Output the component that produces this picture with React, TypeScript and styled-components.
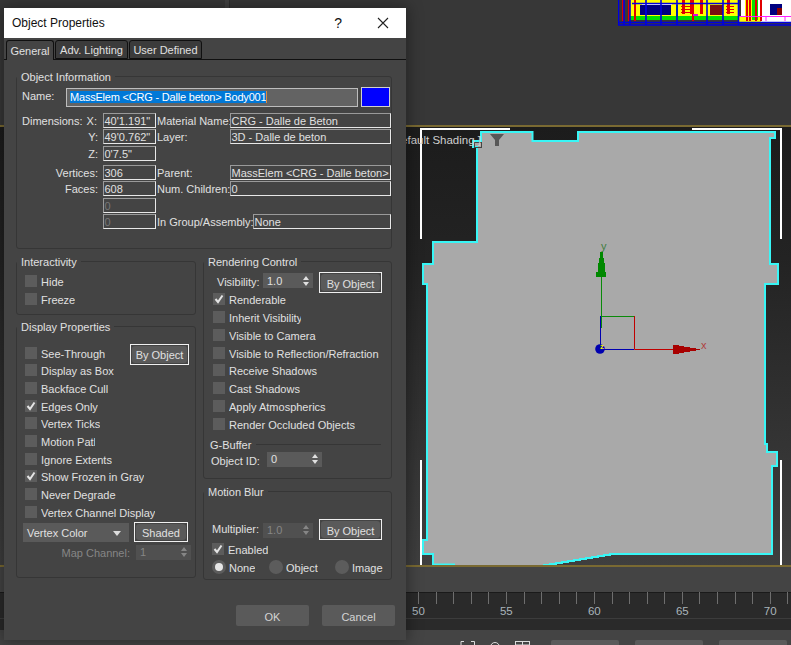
import React from "react";
import styled, { createGlobalStyle } from "styled-components";

const Global = createGlobalStyle`
  html, body { margin: 0; padding: 0; background: #373737; overflow: hidden; }
  #root { width: 791px; height: 645px; }
  * { box-sizing: border-box; }
`;

const Page = styled.div`
  position: relative;
  width: 791px;
  height: 645px;
  overflow: hidden;
  display: flex;
  flex-direction: column;
  font-family: "Liberation Sans", Arial, sans-serif;
  font-size: 11px;
  color: #e0e0e0;
`;
const TopPanel = styled.div`
  height: 125px;
  flex: none;
  position: relative;
  background: linear-gradient(90deg, #373737 0 225px, #404040 225px 229px, #2c2c2c 229px 230px, #373737 230px);
`;
const GoldLine = styled.div`
  height: 2px;
  flex: none;
  background: #7a6a32;
`;
const Viewport = styled.div`
  position: relative;
  height: 438px;
  flex: none;
  background: linear-gradient(180deg, #1c1c1c 0%, #232323 30%, #2f2f2f 60%, #3f3f3f 100%);
`;
const ViewportLabel = styled.span`
  position: absolute;
  right: 310px;
  top: 7px;
  font-size: 11.5px;
  color: #cfcfcf;
  white-space: pre;
`;
const Art = styled.svg`
  position: absolute;
  left: 0;
  top: 0;
  display: block;
`;
const Band = styled.div`
  height: 25px;
  flex: none;
  background: #444444;
`;
const Ruler = styled.div`
  height: 38px;
  flex: none;
  background: linear-gradient(180deg, #1a1a1a 0 1px, #2a2a2a 1px 26px, #3c3c3c 26px 27px, #2a2a2a 27px);
  display: flex;
  padding-left: 400.4px;
`;
const Tick = styled.div`
  position: relative;
  flex: 0 0 17.6px;
  height: 12px;
  border-left: 1px solid #6e6e6e;
`;
const TickLabel = styled.span`
  position: absolute;
  left: -7px;
  top: 13px;
  font-size: 11.5px;
  color: #a9b4ba;
`;
const Status = styled.div`
  height: 15px;
  flex: none;
  overflow: hidden;
  background: #444444;
  display: flex;
  align-items: flex-start;
  padding: 10px 0 0 460px;
  gap: 16px;
`;
const StatusIcons = styled.svg`
  flex: none;
  margin: 1px -1px 0 0;
  display: block;
`;
const StatusChip = styled.div`
  width: 68px;
  height: 12px;
  background: #5a5a5a;
  border-radius: 2px 2px 0 0;
`;

const Dialog = styled.div`
  position: absolute;
  left: 4px;
  top: 8px;
  width: 402px;
  height: 632px;
  background: #444444;
  box-shadow: 0 0 14px 2px rgba(0, 0, 0, 0.35);
  display: flex;
  flex-direction: column;
`;
const TitleBar = styled.div`
  height: 30px;
  flex: none;
  background: #ffffff;
  color: #111111;
  display: flex;
  align-items: center;
  padding: 0 17px 0 8px;
  font-size: 12px;
`;
const TitleText = styled.span`
  flex: 1;
`;
const HelpMark = styled.span`
  font-size: 14px;
  margin-right: 35px;
`;
const TabBar = styled.div`
  height: 22px;
  flex: none;
  display: flex;
  align-items: flex-end;
  padding-left: 2px;
  gap: 1px;
  border-bottom: 1px solid #101010;
`;
const Tab = styled.div<{ $active?: boolean; $w: number }>`
  width: ${(p) => p.$w}px;
  height: ${(p) => (p.$active ? 20 : 19)}px;
  margin-bottom: ${(p) => (p.$active ? -1 : 0)}px;
  background: ${(p) => (p.$active ? "#444444" : "#3b3b3b")};
  border: 1px solid #101010;
  border-bottom: ${(p) => (p.$active ? "none" : "1px solid #101010")};
  border-radius: 3px 3px 0 0;
  display: flex;
  align-items: center;
  justify-content: center;
`;
const Body = styled.div`
  flex: 1;
  padding: 16px 14px 0 12px;
  display: flex;
  flex-direction: column;
`;
const Group = styled.div<{ $h: number; $pt: number; $pl: number; $mt?: number }>`
  position: relative;
  height: ${(p) => p.$h}px;
  margin-top: ${(p) => p.$mt ?? 0}px;
  border: 1px solid #363636;
  border-radius: 3px;
  padding: ${(p) => p.$pt}px 0 0 ${(p) => p.$pl}px;
  display: flex;
  flex-direction: column;
`;
const Legend = styled.span`
  position: absolute;
  left: 0;
  top: -8px;
  height: 16px;
  line-height: 16px;
  padding: 0 4px;
  background: #444444;
  white-space: nowrap;
`;
const NameRow = styled.div`
  height: 20px;
  display: flex;
  align-items: center;
  margin-bottom: 6px;
`;
const NameLabel = styled.span`
  width: 44px;
  margin-top: -2px;
`;
const NameInput = styled.div`
  width: 292px;
  height: 19px;
  background: #636363;
  border: 1px solid #bdbdbd;
  padding-left: 3px;
  display: flex;
  align-items: center;
  color: #ffffff;
`;
const Selected = styled.span`
  width: 197px;
  height: 12px;
  line-height: 12px;
  letter-spacing: -0.2px;
  background: #0078d7;
  border-right: 1px solid #e08a3c;
  white-space: nowrap;
  overflow: hidden;
`;
const Swatch = styled.div`
  width: 29px;
  height: 20px;
  margin-left: 3px;
  background: #0000ff;
  border: 1px solid #d0d0d0;
`;
const InfoGrid = styled.div`
  display: grid;
  grid-template-columns: 81px 53px 74px 161px;
  grid-template-rows: 16px 17px 19px 16px 17px 16px 15px;
`;
const DimLabel = styled.span`
  height: 15px;
  line-height: 17px;
  display: flex;
  justify-content: space-between;
  padding-right: 6px;
`;
const RightLabel = styled.span`
  height: 15px;
  line-height: 17px;
  text-align: right;
  padding-right: 5px;
  white-space: nowrap;
`;
const MidLabel = styled.span`
  height: 15px;
  line-height: 17px;
  padding-left: 1px;
  white-space: nowrap;
`;
const Field = styled.div<{ $dim?: boolean }>`
  height: 15px;
  line-height: 15px;
  padding-left: 0.5px;
  border: 1px solid;
  border-color: #9a9a9a #e8e8e8 #e8e8e8 #9a9a9a;
  color: ${(p) => (p.$dim ? "#777777" : "#e0e0e0")};
  white-space: nowrap;
  overflow: hidden;
`;
const Empty = styled.span``;
const GroupRow = styled.div`
  grid-column: 3 / 5;
  display: grid;
  grid-template-columns: 97px 138px;
`;
const Columns = styled.div`
  display: grid;
  grid-template-columns: 180px 189px;
  column-gap: 7px;
  margin-top: 12px;
`;
const Stack = styled.div`
  display: flex;
  flex-direction: column;
`;
const CheckRow = styled.div<{ $h: number }>`
  height: ${(p) => p.$h}px;
  display: flex;
  align-items: center;
  justify-content: space-between;
`;
const CheckItem = styled.div`
  display: flex;
  align-items: center;
`;
const Box = styled.span`
  width: 12px;
  height: 12px;
  flex: none;
  margin-right: 4px;
  background: #5c5c5c;
  display: flex;
  align-items: center;
  justify-content: center;
`;
const ClipText = styled.span<{ $w?: number }>`
  display: block;
  padding-top: 2px;
  white-space: nowrap;
  overflow: hidden;
  ${(p) => (p.$w ? `width: ${p.$w}px;` : "")}
`;
const OutlinedButton = styled.div<{ $w: number; $h: number; $mt?: number; $mr?: number }>`
  width: ${(p) => p.$w}px;
  height: ${(p) => p.$h}px;
  margin-top: ${(p) => p.$mt ?? 0}px;
  margin-right: ${(p) => p.$mr ?? 0}px;
  flex: none;
  border: 1px solid #f0f0f0;
  padding: 1px;
`;
const ButtonFace = styled.div`
  height: 100%;
  padding-top: 2px;
  background: #5a5a5a;
  border-radius: 3px;
  display: flex;
  align-items: center;
  justify-content: center;
`;
const ShadeRow = styled.div`
  display: flex;
  height: 20px;
  margin: 1px 0 0 -2px;
  align-items: flex-start;
`;
const Dropdown = styled.div`
  width: 106px;
  height: 19px;
  margin: 1px 5px 0 0;
  padding: 2px 8px 0 4px;
  background: #5a5a5a;
  display: flex;
  align-items: center;
  justify-content: space-between;
`;
const MapRow = styled.div`
  display: flex;
  align-items: center;
  margin: 3px 0 0 -2px;
  height: 15px;
  color: #868686;
`;
const MapLabel = styled.span`
  width: 107px;
  padding-top: 2px;
  text-align: right;
  margin-right: 6px;
`;
const Spinner = styled.div<{ $w: number; $dim?: boolean }>`
  width: ${(p) => p.$w}px;
  height: 15px;
  flex: none;
  background: ${(p) => (p.$dim ? "#505050" : "#5a5a5a")};
  color: ${(p) => (p.$dim ? "#868686" : "#e0e0e0")};
  padding: 0 4px;
  display: flex;
  align-items: center;
  justify-content: space-between;
`;
const VisibilityRow = styled.div`
  height: 18px;
  display: flex;
  align-items: flex-start;
  padding-left: 4px;
`;
const FieldLabel = styled.span<{ $w: number; $dy?: number }>`
  width: ${(p) => p.$w}px;
  padding-top: ${(p) => p.$dy ?? 0}px;
  flex: none;
  line-height: 17px;
  white-space: nowrap;
`;
const SpinnerSlot = styled.div`
  margin: 1px 6px 0 0;
`;
const SubHeader = styled.div`
  display: flex;
  align-items: center;
  height: 14px;
  margin: 5px 10px 0 -3px;
`;
const SubLine = styled.span`
  flex: 1;
  height: 1px;
  margin-left: 5px;
  background: #363636;
`;
const SubRow = styled.div`
  display: flex;
  align-items: center;
  height: 15px;
  margin-left: -2px;
`;
const MultiplierRow = styled.div`
  height: 21px;
  margin-top: 27px;
  display: flex;
  align-items: center;
`;
const RadioRow = styled.div`
  height: 18px;
  display: grid;
  grid-template-columns: 57px 66px auto;
  align-items: center;
`;
const Radio = styled.span<{ $on?: boolean }>`
  width: 14px;
  height: 14px;
  flex: none;
  border-radius: 50%;
  margin-right: 3px;
  background: #5c5c5c;
  display: flex;
  align-items: center;
  justify-content: center;
  &::after {
    content: "";
    width: 8px;
    height: 8px;
    border-radius: 50%;
    background: ${(p) => (p.$on ? "#e6e6e6" : "transparent")};
  }
`;
const Footer = styled.div`
  display: flex;
  gap: 13px;
  justify-content: flex-end;
  margin: 25px -3px 0 0;
`;
const PushButton = styled.div`
  width: 73px;
  height: 21px;
  padding-top: 2px;
  background: #5a5a5a;
  border-radius: 2px;
  display: flex;
  align-items: center;
  justify-content: center;
  color: #d4d4d4;
`;

const Check = () => (
  <svg width="10" height="10" viewBox="0 0 10 10">
    <path d="M1.5 5 L4 8 L8.5 1.5" fill="none" stroke="#e4e4e4" strokeWidth="2" />
  </svg>
);
const Arrows = () => (
  <svg width="6" height="10" viewBox="0 0 6 10">
    <path d="M3 0 L6 4 H0 Z M3 10 L0 6 H6 Z" fill="currentColor" />
  </svg>
);
const Caret = () => (
  <svg width="8" height="5" viewBox="0 0 8 5">
    <path d="M0 0 H8 L4 5 Z" fill="#dcdcdc" />
  </svg>
);

const CheckBoxRow = ({ label, on, h, w, children }: { label: string; on?: boolean; h: number; w?: number; children?: React.ReactNode }) => (
  <CheckRow $h={h}>
    <CheckItem>
      <Box>{on && <Check />}</Box>
      <ClipText $w={w}>{label}</ClipText>
    </CheckItem>
    {children}
  </CheckRow>
);

const RadioItem = ({ label, on }: { label: string; on?: boolean }) => (
  <CheckItem>
    <Radio $on={on} />
    <ClipText>{label}</ClipText>
  </CheckItem>
);

const SLOPE = Array.from({ length: 12 }, (_, i) => {
  const x = 616 - i * 6;
  const y = 554 + i;
  return `${x},${y} ${x - 6},${y}`;
}).join(" ");

const OUTLINE = `481,132 532.5,132 532.5,141 578,141 578,132 775,132 775,138 770,138 770,264 778,264 778,284 765,284 765,444 767,444 767,452 777,452 777,466 772,466 772,554 ${SLOPE} 544,568 454,568 454,564.5 433,564.5 433,554 423,554 423,540 427,540 427,284 423,284 423,264 433,264 433,242 477,242 477,147 473,147 473,141 481,141`;

const ViewportArt = () => (
  <Art width="791" height="438" viewBox="0 127 791 438">
    <g stroke="#ffffff" strokeWidth="2" fill="none">
      <path d="M510 129 H421 V239" />
      <path d="M692 129 H781 V239" />
      <path d="M421 460 V565" />
      <path d="M781 460 V565" />
    </g>
    <polygon points={OUTLINE} fill="#a9a9a9" stroke="#38f6f6" strokeWidth="2" />
    <path d="M490 134 H504 L499 140 V146 H495 V140 Z" fill="#575757" />
    <rect x="474.5" y="142.5" width="7" height="5" fill="none" stroke="#444" />
    <path d="M634.5 316 V349.5 H673" stroke="#c00000" fill="none" />
    <path d="M600.5 316 V349.5 H634" stroke="#0000b0" fill="none" />
    <path d="M601.5 277 V328 M601 316.5 H634" stroke="#0a8a0a" fill="none" />
    <path d="M600 252 H603 V258 H604 V263 H605 V272 H606 V277 H596 V272 H598 V263 H599 V258 H600 Z" fill="#008800" />
    <text x="601" y="250" fontSize="11" fontFamily="Liberation Sans, sans-serif" fill="#3f7d3f">y</text>
    <path d="M673 345 H679 V346 H684 V347 H690 V348 H696 V351 H690 V352 H684 V353 H679 V354 H673 Z" fill="#a80000" />
    <path d="M696 349.5 H700" stroke="#a80000" />
    <text x="701" y="349" fontSize="11" fontFamily="Liberation Sans, sans-serif" fill="#b04040">x</text>
    <circle cx="600" cy="349" r="4.8" fill="#0000b0" />
    <text x="600" y="349" fontSize="8" fontWeight="bold" fontFamily="Liberation Sans, sans-serif" fill="#f0f000">z</text>
  </Art>
);

const Plan = styled.svg`
  position: absolute;
  left: 618px;
  top: 0;
  display: block;
`;
const PlanArt = () => (
  <Plan width="173" height="26" viewBox="618 0 173 26">
    <rect x="630" y="0" width="109" height="16" fill="#ffff00" />
    <rect x="630" y="16" width="109" height="4" fill="#00e000" />
    <rect x="640" y="5" width="31" height="10" fill="#000080" />
    <rect x="642" y="4" width="30" height="1" fill="#ffffff" />
    <rect x="676" y="5" width="2" height="12" fill="#00a000" />
    <rect x="710" y="5" width="13" height="10" fill="#7a1010" />
    <rect x="741" y="0" width="50" height="22" fill="#ffffff" />
    <rect x="739" y="17" width="22" height="5" fill="#ffff00" />
    <rect x="770" y="4" width="12" height="11" fill="#000080" />
    <rect x="777" y="8" width="5" height="7" fill="#8b0000" />
    <rect x="745" y="0" width="13" height="16" fill="#ffff00" />
    <rect x="752" y="0" width="6" height="20" fill="#00e000" />
    {[622, 628, 634, 692, 746, 749, 755, 760].map((x) => (
      <rect key={x} x={x} y="0" width="2" height="21" fill="#e00000" />
    ))}
    {[682, 690, 727, 700].map((x) => (
      <rect key={x} x={x} y="0" width="3" height="14" fill="#e00000" />
    ))}
    {[6, 9, 12].map((y) => (
      <React.Fragment key={y}>
        <rect x="681" y={y} width="9" height="1" fill="#e00000" />
        <rect x="726" y={y} width="8" height="1" fill="#e00000" />
      </React.Fragment>
    ))}
    <rect x="693" y="14" width="5" height="2" fill="#e000e0" />
    <path d="M739 16.5 H791 M766 16 V21 M785 16 V21" stroke="#ff20ff" strokeWidth="1" fill="none" />
    <path d="M632 3.5 H739 M618 22.5 H791 M618 25 H791" stroke="#0000e0" strokeWidth="1.6" />
    {[618.5, 624, 630, 646, 661, 677, 707, 723, 738.5].map((x) => (
      <path key={x} d={`M${x} 0 V25`} stroke="#0000e0" strokeWidth="1.6" />
    ))}
  </Plan>
);

const TICKS = Array.from({ length: 23 }, (_, i) => i);

export default function App() {
  return (
    <Page>
      <Global />
      <TopPanel>
        <PlanArt />
      </TopPanel>
      <GoldLine />
      <Viewport>
        <ViewportArt />
        <ViewportLabel>[ Default Shading ]</ViewportLabel>
      </Viewport>
      <GoldLine />
      <Band />
      <Ruler>
        {TICKS.map((i) => (
          <Tick key={i}>{i % 5 === 1 && <TickLabel>{50 + (i - 1)}</TickLabel>}</Tick>
        ))}
      </Ruler>
      <Status>
        <StatusIcons width="76" height="8" viewBox="0 0 76 8" fill="none" stroke="#dcdcdc">
          <path d="M1 5 V0.5 H4 M11 0.5 H14.5 V5" />
          <circle cx="35" cy="6" r="4.5" />
          <rect x="55.5" y="0.5" width="14" height="10" />
          <path d="M62.5 0.5 V8 M55.5 4 H69.5" />
        </StatusIcons>
        <StatusChip />
        <StatusChip />
        <StatusChip />
      </Status>

      <Dialog>
        <TitleBar>
          <TitleText>Object Properties</TitleText>
          <HelpMark>?</HelpMark>
          <svg width="12" height="12" viewBox="0 0 12 12">
            <path d="M1 1 L11 11 M11 1 L1 11" stroke="#222" strokeWidth="1.1" />
          </svg>
        </TitleBar>
        <TabBar>
          <Tab $active $w={48}>General</Tab>
          <Tab $w={73}>Adv. Lighting</Tab>
          <Tab $w={73}>User Defined</Tab>
        </TabBar>
        <Body>
          <Group $h={173} $pt={10} $pl={5}>
            <Legend>Object Information</Legend>
            <NameRow>
              <NameLabel>Name:</NameLabel>
              <NameInput>
                <Selected>MassElem &lt;CRG - Dalle beton&gt; Body001</Selected>
              </NameInput>
              <Swatch />
            </NameRow>
            <InfoGrid>
              <DimLabel><span>Dimensions:</span><span>X:</span></DimLabel>
              <Field>40'1.191"</Field>
              <MidLabel>Material Name:</MidLabel>
              <Field>CRG - Dalle de Beton</Field>

              <RightLabel>Y:</RightLabel>
              <Field>49'0.762"</Field>
              <MidLabel>Layer:</MidLabel>
              <Field>3D - Dalle de beton</Field>

              <RightLabel>Z:</RightLabel>
              <Field>0'7.5"</Field>
              <Empty />
              <Empty />

              <RightLabel>Vertices:</RightLabel>
              <Field>306</Field>
              <MidLabel>Parent:</MidLabel>
              <Field>MassElem &lt;CRG - Dalle beton&gt;</Field>

              <RightLabel>Faces:</RightLabel>
              <Field>608</Field>
              <MidLabel>Num. Children:</MidLabel>
              <Field>0</Field>

              <Empty />
              <Field $dim>0</Field>
              <Empty />
              <Empty />

              <Empty />
              <Field $dim>0</Field>
              <GroupRow>
                <MidLabel>In Group/Assembly:</MidLabel>
                <Field>None</Field>
              </GroupRow>
            </InfoGrid>
          </Group>

          <Columns>
            <Stack>
              <Group $h={54} $pt={10} $pl={8}>
                <Legend>Interactivity</Legend>
                <CheckBoxRow h={18} label="Hide" />
                <CheckBoxRow h={18} label="Freeze" />
              </Group>
              <Group $h={252} $pt={17} $pl={8} $mt={11}>
                <Legend>Display Properties</Legend>
                <CheckBoxRow h={17.67} label="See-Through">
                  <OutlinedButton $w={59} $h={21} $mt={3} $mr={6}>
                    <ButtonFace>By Object</ButtonFace>
                  </OutlinedButton>
                </CheckBoxRow>
                <CheckBoxRow h={17.67} label="Display as Box" />
                <CheckBoxRow h={17.67} label="Backface Cull" />
                <CheckBoxRow h={17.67} label="Edges Only" on />
                <CheckBoxRow h={17.67} label="Vertex Ticks" />
                <CheckBoxRow h={17.67} label="Motion Path" w={54} />
                <CheckBoxRow h={17.67} label="Ignore Extents" />
                <CheckBoxRow h={17.67} label="Show Frozen in Gray" on />
                <CheckBoxRow h={17.67} label="Never Degrade" />
                <CheckBoxRow h={17.67} label="Vertex Channel Display" />
                <ShadeRow>
                  <Dropdown>
                    <span>Vertex Color</span>
                    <Caret />
                  </Dropdown>
                  <OutlinedButton $w={54} $h={20}>
                    <ButtonFace>Shaded</ButtonFace>
                  </OutlinedButton>
                </ShadeRow>
                <MapRow>
                  <MapLabel>Map Channel:</MapLabel>
                  <Spinner $w={55} $dim>
                    <span>1</span>
                    <Arrows />
                  </Spinner>
                </MapRow>
              </Group>
            </Stack>
            <Stack>
              <Group $h={218} $pt={10} $pl={9}>
                <Legend>Rendering Control</Legend>
                <VisibilityRow>
                  <FieldLabel $w={46} $dy={2}>Visibility:</FieldLabel>
                  <SpinnerSlot>
                    <Spinner $w={50}>
                      <span>1.0</span>
                      <Arrows />
                    </Spinner>
                  </SpinnerSlot>
                  <OutlinedButton $w={63} $h={21}>
                    <ButtonFace>By Object</ButtonFace>
                  </OutlinedButton>
                </VisibilityRow>
                <CheckBoxRow h={17.86} label="Renderable" on />
                <CheckBoxRow h={17.86} label="Inherit Visibility" w={72} />
                <CheckBoxRow h={17.86} label="Visible to Camera" />
                <CheckBoxRow h={17.86} label="Visible to Reflection/Refraction" />
                <CheckBoxRow h={17.86} label="Receive Shadows" />
                <CheckBoxRow h={17.86} label="Cast Shadows" />
                <CheckBoxRow h={17.86} label="Apply Atmospherics" />
                <CheckBoxRow h={17.86} label="Render Occluded Objects" />
                <SubHeader>
                  <span>G-Buffer</span>
                  <SubLine />
                </SubHeader>
                <SubRow>
                  <FieldLabel $w={56} $dy={4}>Object ID:</FieldLabel>
                  <Spinner $w={55}>
                    <span>0</span>
                    <Arrows />
                  </Spinner>
                </SubRow>
              </Group>
              <Group $h={89} $pt={0} $pl={8} $mt={12}>
                <Legend>Motion Blur</Legend>
                <MultiplierRow>
                  <FieldLabel $w={51}>Multiplier:</FieldLabel>
                  <SpinnerSlot>
                    <Spinner $w={50} $dim>
                      <span>1.0</span>
                      <Arrows />
                    </Spinner>
                  </SpinnerSlot>
                  <OutlinedButton $w={63} $h={21}>
                    <ButtonFace>By Object</ButtonFace>
                  </OutlinedButton>
                </MultiplierRow>
                <CheckBoxRow h={18} label="Enabled" on />
                <RadioRow>
                  <RadioItem label="None" on />
                  <RadioItem label="Object" />
                  <RadioItem label="Image" />
                </RadioRow>
              </Group>
            </Stack>
          </Columns>
          <Footer>
            <PushButton>OK</PushButton>
            <PushButton>Cancel</PushButton>
          </Footer>
        </Body>
      </Dialog>
    </Page>
  );
}
